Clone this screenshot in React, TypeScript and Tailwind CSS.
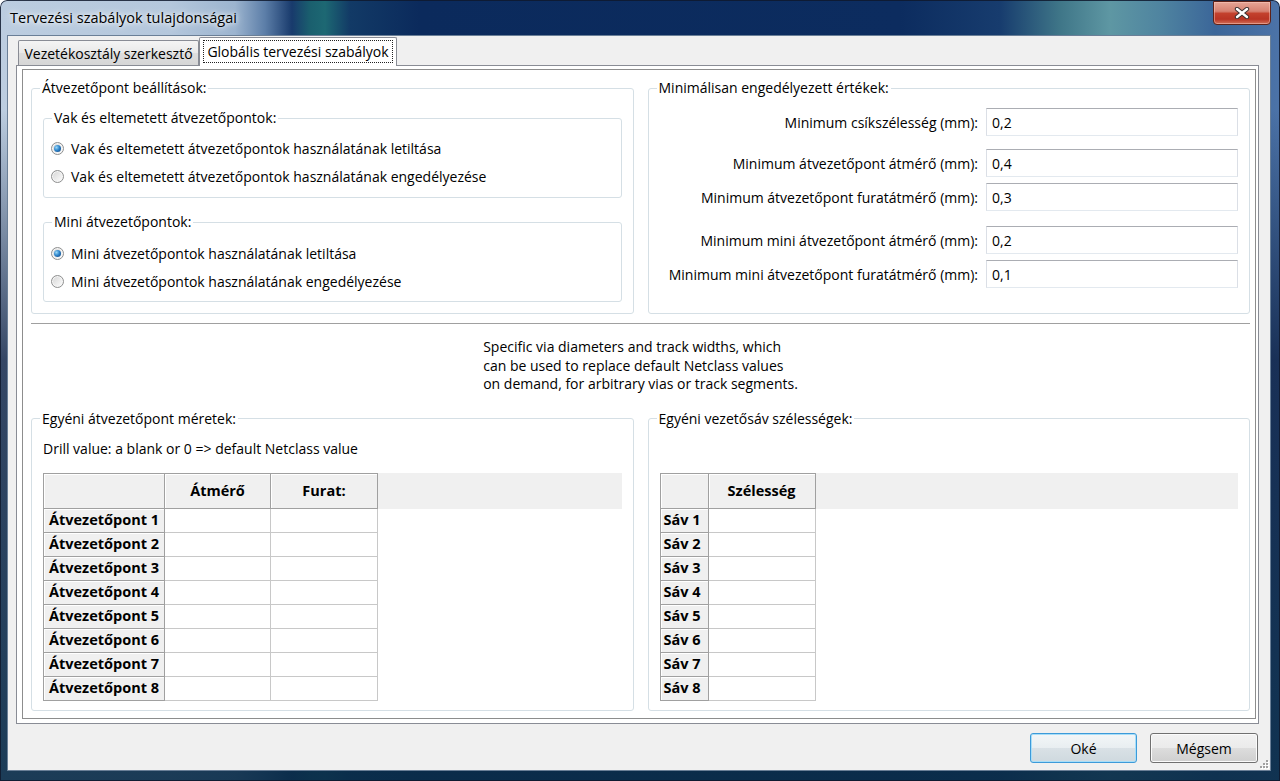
import React from "react";

function Radio({ checked, label }: { checked?: boolean; label: string }) {
  return (
    <div className="flex h-[20px] items-center">
      <span className="ml-[7px] flex h-[13px] w-[13px] items-center justify-center rounded-full border border-[#8e8f8f] bg-[linear-gradient(135deg,#d4d4d4,#ffffff)] shadow-[inset_0_0_0_1px_#f6f6f6]">
        {checked && (
          <span className="h-[7px] w-[7px] rounded-full bg-[radial-gradient(circle_at_35%_35%,#9ad8f8_0%,#2f86cc_45%,#0d3a74_100%)]" />
        )}
      </span>
      <span className="ml-[7px] whitespace-nowrap">{label}</span>
    </div>
  );
}

function Group({
  title,
  className,
  children,
}: {
  title: string;
  className: string;
  children?: React.ReactNode;
}) {
  return (
    <fieldset className={`min-w-0 rounded-[3px] border border-[#d5dfe5] ${className}`}>
      <legend className="ml-[8px] px-[2px] leading-[16px]">{title}</legend>
      {children}
    </fieldset>
  );
}

function DataGrid({
  labelW,
  labelPad,
  cols,
  rows,
}: {
  labelW: string;
  labelPad: string;
  cols: { title: string; w: string }[];
  rows: string[];
}) {
  return (
    <div className="mx-[11px]">
      <div className="flex h-[36px] bg-[#f0f0f0]">
        <div className={`${labelW} border border-[#a0a0a0] shadow-[inset_1px_1px_0_#ffffff]`} />
        {cols.map((c) => (
          <div
            key={c.title}
            className={`${c.w} flex items-center justify-center border-y border-r border-[#a0a0a0] text-[14.5px] font-bold shadow-[inset_1px_1px_0_#ffffff]`}
          >
            {c.title}
          </div>
        ))}
      </div>
      {rows.map((r) => (
        <div key={r} className="flex h-[24px]">
          <div
            className={`${labelW} ${labelPad} flex items-center overflow-hidden border-x border-b border-[#a0a0a0] bg-[#f0f0f0] text-[14.5px] font-bold whitespace-nowrap shadow-[inset_1px_1px_0_#ffffff]`}
          >
            {r}
          </div>
          {cols.map((c) => (
            <div key={c.title} className={`${c.w} border-b border-r border-[#c8c8c8] bg-white`} />
          ))}
        </div>
      ))}
    </div>
  );
}

const minRows = [
  { label: "Minimum csíkszélesség (mm):", value: "0,2", mt: "mt-[12px]" },
  { label: "Minimum átvezetőpont átmérő (mm):", value: "0,4", mt: "mt-[13px]" },
  { label: "Minimum átvezetőpont furatátmérő (mm):", value: "0,3", mt: "mt-[6px]" },
  { label: "Minimum mini átvezetőpont átmérő (mm):", value: "0,2", mt: "mt-[15px]" },
  { label: "Minimum mini átvezetőpont furatátmérő (mm):", value: "0,1", mt: "mt-[6px]" },
];

export default function App() {
  const viaRows = Array.from({ length: 8 }, (_, i) => `Átvezetőpont ${i + 1}`);
  const trackRows = Array.from({ length: 8 }, (_, i) => `Sáv ${i + 1}`);

  return (
    <div className="relative flex h-[781px] w-[1280px] flex-col overflow-hidden rounded-t-[7px] bg-[linear-gradient(to_bottom,rgba(0,0,0,0)_0px,rgba(0,0,0,0)_110px,rgba(8,26,60,0.75)_360px,rgba(10,44,72,0.9)_781px),linear-gradient(90deg,#bccde0_0px,#b4c7dc_170px,#9cb4cf_235px,#5c7ea8_265px,#183a6c_292px,#1a5f6e_310px,#1d6873_325px,#123a66_350px,#0b2a5c_420px,#0c2c5f_900px,#173c6e_1000px,#3f7688_1060px,#5e97a3_1110px,#4f84a0_1160px,#3b6699_1215px,#4c73a8_1280px)] font-['Open_Sans',sans-serif] text-[14px] text-black shadow-[inset_0_0_0_1px_rgba(15,25,45,0.85)]">
      {/* title bar */}
      <div className="flex h-[35px] items-start">
        <div className="pl-[10px] pt-[8px] text-[14.5px] leading-[20px] text-black [text-shadow:0_0_8px_#ffffff,0_0_4px_#ffffff]">
          Tervezési szabályok tulajdonságai
        </div>
        <div className="ml-auto mr-[9px] mt-[1px] flex h-[24px] w-[58px] items-center justify-center rounded-b-[4px] border border-[#5e2218] bg-[linear-gradient(to_bottom,#e6a596_0%,#d68171_42%,#c3412d_52%,#b93424_78%,#d16f57_100%)] shadow-[inset_0_0_0_1px_rgba(255,210,200,0.45)]">
          <svg width="16" height="12" viewBox="0 0 16 12">
            <path d="M3 2 L13 10 M13 2 L3 10" stroke="#3a3030" strokeWidth="4.4" strokeLinecap="round" />
            <path d="M3 2 L13 10 M13 2 L3 10" stroke="#ffffff" strokeWidth="2.4" strokeLinecap="round" />
          </svg>
        </div>
      </div>

      {/* body frame */}
      <div className="flex flex-1 flex-col pb-[10px] pl-[7px] pr-[9px]">
        <div className="relative flex flex-1 flex-col border border-[#6a7f97] bg-[#f0f0f0] pl-[8px] pr-[11px] pt-[1px]">
          {/* tabs */}
          <div className="flex h-[28px] items-end pl-[2px]">
            <div className="flex h-[25px] w-[181px] items-center justify-center rounded-t-[2px] border border-b-0 border-[#898c95] bg-[linear-gradient(to_bottom,#f4f4f4,#e9e9e9_50%,#dedede_50%,#d6d6d6)] pt-[1px] whitespace-nowrap">
              Vezetékosztály szerkesztő
            </div>
            <div className="relative z-10 -mb-px flex h-[29px] w-[198px] justify-center rounded-t-[2px] border border-b-0 border-[#898c95] bg-white pt-[2px]">
              <span className="flex h-[23px] w-[190px] items-center justify-center border border-dotted border-[#222] whitespace-nowrap">
                Globális tervezési szabályok
              </span>
            </div>
          </div>

          {/* tab panel */}
          <div className="flex h-[659px] border border-[#898c95] bg-white pb-[4px] pl-[5px] pr-[2px] pt-[3px]">
            <div className="flex flex-1 flex-col border border-[#8d8d8d] pl-[8px] pr-[5px] pt-[10px]">
              <div className="grid grid-cols-2 gap-x-[14px]">
                <Group title="Átvezetőpont beállítások:" className="h-[234px]">
                  <Group title="Vak és eltemetett átvezetőpontok:" className="mx-[11px] mt-[14px] pb-[11px]">
                    <div className="flex flex-col gap-[8px] pt-[12px]">
                      <Radio checked label="Vak és eltemetett átvezetőpontok használatának letiltása" />
                      <Radio label="Vak és eltemetett átvezetőpontok használatának engedélyezése" />
                    </div>
                  </Group>
                  <Group title="Mini átvezetőpontok:" className="mx-[11px] mt-[16px] pb-[10px]">
                    <div className="flex flex-col gap-[8px] pt-[13px]">
                      <Radio checked label="Mini átvezetőpontok használatának letiltása" />
                      <Radio label="Mini átvezetőpontok használatának engedélyezése" />
                    </div>
                  </Group>
                </Group>
                <Group title="Minimálisan engedélyezett értékek:" className="h-[234px]">
                  {minRows.map((r) => (
                    <div key={r.label} className={`flex items-center ${r.mt}`}>
                      <div className="flex-1 pr-[8px] text-right whitespace-nowrap">{r.label}</div>
                      <div className="mr-[11px] flex h-[28px] w-[252px] items-center border border-[#abadb3] border-x-[#dbdfe6] border-b-[#e3e9ef] pl-[5px]">
                        {r.value}
                      </div>
                    </div>
                  ))}
                </Group>
              </div>

              <div className="mt-[9px] border-t border-[#a0a0a0]" />

              <div className="mx-auto mt-[14px] w-fit leading-[18.5px]">
                <div>Specific via diameters and track widths, which</div>
                <div>can be used to replace default Netclass values</div>
                <div>on demand, for arbitrary vias or track segments.</div>
              </div>

              <div className="mt-[17px] grid grid-cols-2 gap-x-[14px]">
                <Group title="Egyéni átvezetőpont méretek:" className="h-[300px]">
                  <div className="mt-[13px] pl-[11px] leading-[18px]">
                    Drill value: a blank or 0 =&gt; default Netclass value
                  </div>
                  <div className="mt-[15px]">
                    <DataGrid
                      labelW="w-[122px]"
                      labelPad="pl-[5px]"
                      cols={[
                        { title: "Átmérő", w: "w-[106px]" },
                        { title: "Furat:", w: "w-[107px]" },
                      ]}
                      rows={viaRows}
                    />
                  </div>
                </Group>
                <Group title="Egyéni vezetősáv szélességek:" className="h-[300px]">
                  <div className="mt-[46px]">
                    <DataGrid
                      labelW="w-[49px]"
                      labelPad="pl-[3px]"
                      cols={[{ title: "Szélesség", w: "w-[107px]" }]}
                      rows={trackRows}
                    />
                  </div>
                </Group>
              </div>
            </div>
          </div>

          {/* buttons */}
          <div className="mr-[1px] mt-[9px] flex justify-end gap-[13px]">
            <button className="flex h-[30px] w-[107px] items-center justify-center rounded-[3px] border border-[#3c9ad9] bg-[linear-gradient(to_bottom,#f3f6f8_0%,#e8eef1_50%,#d9e1e6_50%,#cfd9df_100%)] shadow-[inset_0_0_0_1px_#a8def8]">
              Oké
            </button>
            <button className="flex h-[30px] w-[108px] items-center justify-center rounded-[3px] border border-[#707070] bg-[linear-gradient(to_bottom,#f2f2f2_0%,#ebebeb_50%,#dddddd_50%,#cfcfcf_100%)] shadow-[inset_0_0_0_1px_#fbfbfb]">
              Mégsem
            </button>
          </div>

          {/* resize grip */}
          <svg className="absolute bottom-[1px] right-[1px]" width="10" height="10" viewBox="0 0 10 10">
            {[
              [7, 1],
              [7, 4],
              [4, 4],
              [7, 7],
              [4, 7],
              [1, 7],
            ].map(([x, y]) => (
              <g key={`${x}-${y}`}>
                <rect x={x + 1} y={y + 1} width="2" height="2" fill="#ffffff" />
                <rect x={x} y={y} width="2" height="2" fill="#a0a0a0" />
              </g>
            ))}
          </svg>
        </div>
      </div>
    </div>
  );
}
